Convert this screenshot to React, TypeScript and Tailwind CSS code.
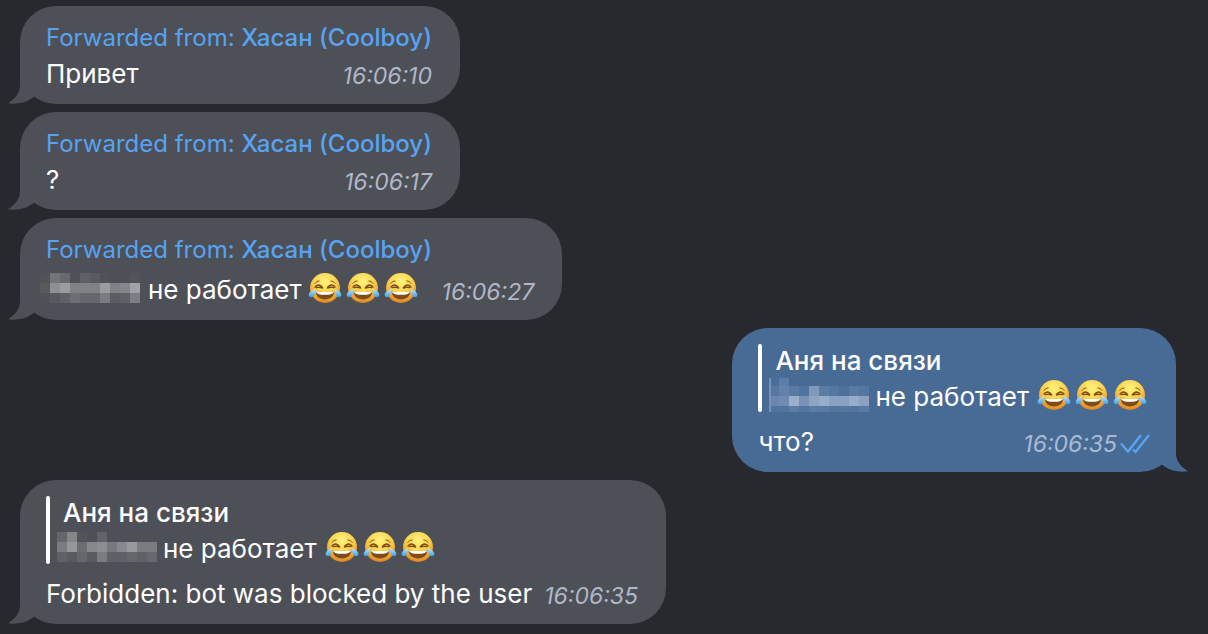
import type { ReactNode } from 'react';

interface BubbleProps {
  outgoing?: boolean;
  children: ReactNode;
}

const MASKS = {
  forwarded: [
    ['#525357', '#737477', '#68696d', '#505257', '#606166', '#5a5b60', '#505257', '#4e5057', '#4e5057', '#525459'],
    ['#58595d', '#8e8f92', '#9b9c9f', '#818286', '#818286', '#818286', '#9b9c9f', '#808186', '#85868b', '#a2a3a7'],
    ['#505257', '#58595e', '#606165', '#6e6f72', '#67686c', '#67686c', '#7b7c7f', '#5c5d62', '#606166', '#7d7e82'],
  ],
  outgoing: [
    ['#4c6f9a', '#5c7da7', '#486b96', '#486b96', '#486b96', '#486b96', '#486b96', '#486b96', '#486b96', '#486b96'],
    ['#5677a2', '#6381aa', '#587aa4', '#5074a0', '#8199bb', '#5a7ca5', '#5578a2', '#4c709c', '#587aa4', '#5477a2'],
    ['#6a87af', '#6f8bb1', '#9bafca', '#7891b5', '#8ea4c2', '#98adc9', '#8aa2c1', '#8aa2c1', '#98adc9', '#8aa2c1'],
    ['#5074a0', '#5074a0', '#5a7ca5', '#5275a0', '#5a7ca5', '#587aa4', '#5275a0', '#5477a2', '#5275a0', '#587aa4'],
  ],
  reply: [
    ['#66676b', '#85868a', '#525459', '#4e5057', '#626368', '#4e5057', '#4e5057', '#4e5057', '#4e5057', '#4e5057'],
    ['#7b7c80', '#96979b', '#6c6d71', '#87888c', '#8d8e92', '#77787d', '#88898e', '#98999d', '#7b7c81', '#7b7c80'],
    ['#606166', '#5a5b60', '#66676b', '#5a5b60', '#7b7c80', '#606166', '#606166', '#66676b', '#606166', '#67686d'],
  ],
};

type MaskName = keyof typeof MASKS;

function Tail({ outgoing }: { outgoing?: boolean }) {
  return (
    <svg
      viewBox="0 0 40 36"
      fill="currentColor"
      aria-hidden="true"
      className={
        outgoing
          ? 'absolute -right-3 bottom-0 h-9 w-10 -scale-x-100 text-[#486b96]'
          : 'absolute -left-3 bottom-0 h-9 w-10 text-[#4e5057]'
      }
    >
      <path d="M12 0V17C12 25 7 31 0 35.3C9 36.6 19 34.5 26 28.8L40 30V0Z" />
    </svg>
  );
}

function Bubble({ outgoing, children }: BubbleProps) {
  return (
    <article
      className={
        outgoing
          ? 'relative mr-8 self-end rounded-[36px] bg-[#486b96] px-[26px] pb-3'
          : 'relative ml-5 self-start rounded-[36px] bg-[#4e5057] pr-7 pl-[26px] pb-3'
      }
    >
      <Tail outgoing={outgoing} />
      <div className="relative">{children}</div>
    </article>
  );
}

function Mask({ name }: { name: MaskName }) {
  const rows = MASKS[name];
  // the four-row mask is cut off inside its first and last rows
  const top = rows.length > 3 ? 2 : 0;
  const height = rows.length > 3 ? 34 : 30;
  return (
    <svg
      width="100"
      height={height}
      viewBox={`0 ${top} 100 ${height}`}
      shapeRendering="crispEdges"
      className="shrink-0"
      aria-hidden="true"
    >
      {rows.map((row, y) =>
        row.map((fill, x) => <rect key={`${x}-${y}`} x={x * 10} y={y * 10} width="10" height="10" fill={fill} />)
      )}
      {name === 'outgoing' && <rect x="0" y="0" width="2" height="40" fill="#7892b5" />}
    </svg>
  );
}

function JoyEmoji() {
  return (
    <svg viewBox="0 0 34 32" className="h-8 w-[34px]" role="img" aria-label="😂">
      <defs>
        <radialGradient id="joy-face" cx="0.5" cy="0.28" r="0.76">
          <stop offset="0" stopColor="#fff382" />
          <stop offset="0.45" stopColor="#fbd650" />
          <stop offset="0.75" stopColor="#efa636" />
          <stop offset="1" stopColor="#d97a20" />
        </radialGradient>
        <linearGradient id="joy-tear" x1="0" y1="0" x2="0" y2="1">
          <stop offset="0" stopColor="#b4e8fd" />
          <stop offset="1" stopColor="#3c9fe8" />
        </linearGradient>
      </defs>
      <circle cx="17" cy="16" r="15" fill="url(#joy-face)" />
      <path d="M7.8 19.2C11 20.6 23 20.6 26.2 19.2C26.4 24 22.6 27.4 17 27.4S7.6 24 7.8 19.2Z" fill="#7d4c17" />
      <path d="M8 19.2C12 20.4 22 20.4 26 19.2C25.8 21.8 22 22.8 17 22.8S8.2 21.8 8 19.2Z" fill="#fff" />
      <g fill="none" stroke="#7d4c17" strokeWidth="1.4" strokeLinecap="round" strokeLinejoin="round">
        <path d="M7 15C8.6 13.2 11 12.8 12.4 13.6S14.4 15.2 14.6 16C12.6 15.2 10.6 15 8.4 15.6" />
        <path d="M27 15C25.4 13.2 23 12.8 21.6 13.6S19.6 15.2 19.4 16C21.4 15.2 23.4 15 25.6 15.6" />
        <path d="M6.8 11.4C8 9.8 9.6 9 11.2 9" strokeWidth="1" />
        <path d="M22.8 9C24.4 9 26 9.8 27.2 11.4" strokeWidth="1" />
      </g>
      <path d="M7.4 17.4C4.4 17.8 1.2 20 .7 22.6C.4 25.2 3.4 26 5 24.4C6.6 22.8 7.2 20 7.4 17.4Z" fill="url(#joy-tear)" />
      <path d="M26.6 17.4C29.6 17.8 32.8 20 33.3 22.6C33.6 25.2 30.6 26 29 24.4C27.4 22.8 26.8 20 26.6 17.4Z" fill="url(#joy-tear)" />
    </svg>
  );
}

function MaskedText({ mask }: { mask: MaskName }) {
  return (
    <>
      <Mask name={mask} />
      <span className={mask === 'forwarded' ? 'ml-2 mr-1.5 pt-1' : 'ml-1.5 mr-2 pt-1'}>не работает</span>
      <span className="flex gap-1">
        <JoyEmoji />
        <JoyEmoji />
        <JoyEmoji />
      </span>
    </>
  );
}

function Time({ value, outgoing }: { value: string; outgoing?: boolean }) {
  return (
    <time
      className={
        outgoing
          ? 'mt-1 ml-auto pr-[3px] text-[23px] leading-8 text-[#a9bbd3] italic'
          : 'mt-1 ml-auto pl-3 text-[23px] leading-8 text-[#b0b7c8] italic'
      }
    >
      {value}
    </time>
  );
}

function ForwardedFrom() {
  return (
    <p className="pt-[14px] text-2xl leading-9 text-[#57a3f3]">
      Forwarded from: <span className="font-medium">Хасан (Coolboy)</span>
    </p>
  );
}

function Quote({ mask }: { mask: MaskName }) {
  return (
    <div className="pt-4 pb-3">
      <blockquote className="relative h-[68px] pr-[3px] pl-[17px] leading-[34px]">
        <span className="absolute inset-y-0 left-0 w-1 rounded-full bg-white" />
        <p className="font-medium">Аня на связи</p>
        <div className="-ml-1.5 flex h-[34px] items-center">
          <MaskedText mask={mask} />
        </div>
      </blockquote>
    </div>
  );
}

function ReadMark() {
  return (
    <svg
      viewBox="0 0 30 20"
      className="mt-1 h-5 w-[30px]"
      fill="none"
      stroke="#57a3f3"
      strokeWidth="2.4"
      role="img"
      aria-label="Read"
    >
      <path d="M1 9.5L8 17.5L21 1" />
      <path d="M13 15.5L15.5 18L29 1" />
    </svg>
  );
}

export default function App() {
  return (
    <main className="flex min-h-screen flex-col gap-2 bg-[#28292e] pt-1.5 pb-2.5 font-['Inter',sans-serif] text-[26px] leading-9 whitespace-nowrap text-white">
      <Bubble>
        <ForwardedFrom />
        <div className="flex">
          <p>Привет</p>
          <Time value="16:06:10" />
        </div>
      </Bubble>

      <Bubble>
        <ForwardedFrom />
        <div className="flex">
          <p>?</p>
          <Time value="16:06:17" />
        </div>
      </Bubble>

      <Bubble>
        <ForwardedFrom />
        <div className="-ml-1.5 flex h-10 items-center">
          <MaskedText mask="forwarded" />
          <div className="flex pt-1 pl-3">
            <Time value="16:06:27" />
          </div>
        </div>
      </Bubble>

      <Bubble outgoing>
        <Quote mask="outgoing" />
        <div className="flex items-center">
          <p>что?</p>
          <Time value="16:06:35" outgoing />
          <ReadMark />
        </div>
      </Bubble>

      <Bubble>
        <Quote mask="reply" />
        <div className="flex">
          <p>Forbidden: bot was blocked by the user</p>
          <Time value="16:06:35" />
        </div>
      </Bubble>
    </main>
  );
}
